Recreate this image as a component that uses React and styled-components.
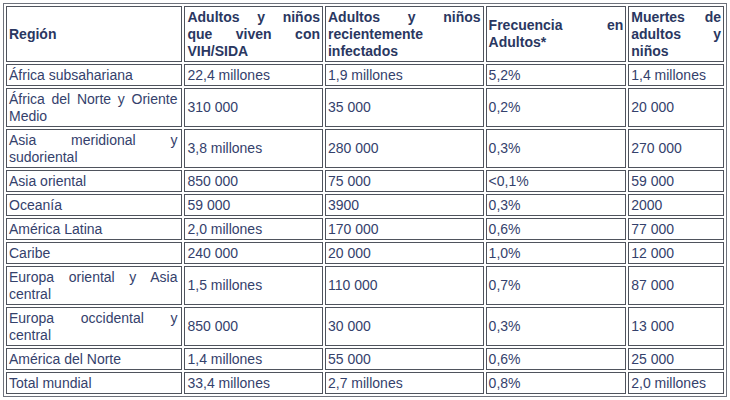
import React from "react";
import styled, { createGlobalStyle } from "styled-components";

const GlobalStyle = createGlobalStyle`
  body {
    margin: 0;
    padding: 3px;
    background: #ffffff;
    font-family: "Liberation Sans", Arial, sans-serif;
  }
`;

const Table = styled.table`
  width: 724px;
  border: 1px solid #6e727c;
  border-collapse: separate;
  border-spacing: 2px;
  color: #34416c;
  font-size: 14px;
  line-height: 17px;
`;

const Col = styled.col`
  width: ${(props) => props.$w}px;
`;

const HeadCell = styled.th`
  border: 1px solid #4f535d;
  padding: 1.5px 2px;
  height: 51px;
  font-weight: bold;
  text-align: ${(props) => (props.$justify ? "justify" : "left")};
  vertical-align: middle;
  color: #2a3761;
`;

const Cell = styled.td`
  border: 1px solid #4f535d;
  padding: 1.5px ${(props) => (props.$justify ? 4 : 2)}px 1.5px 2px;
  height: ${(props) => (props.$tall ? 34 : 17)}px;
  text-align: ${(props) => (props.$justify ? "justify" : "left")};
  vertical-align: middle;
`;

const rows = [
  ["África subsahariana", "22,4 millones", "1,9 millones", "5,2%", "1,4 millones"],
  ["África del Norte y Oriente Medio", "310 000", "35 000", "0,2%", "20 000", true],
  ["Asia meridional y sudoriental", "3,8 millones", "280 000", "0,3%", "270 000", true],
  ["Asia oriental", "850 000", "75 000", "<0,1%", "59 000"],
  ["Oceanía", "59 000", "3900", "0,3%", "2000"],
  ["América Latina", "2,0 millones", "170 000", "0,6%", "77 000"],
  ["Caribe", "240 000", "20 000", "1,0%", "12 000"],
  ["Europa oriental y Asia central", "1,5 millones", "110 000", "0,7%", "87 000", true],
  ["Europa occidental y central", "850 000", "30 000", "0,3%", "13 000", true],
  ["América del Norte", "1,4 millones", "55 000", "0,6%", "25 000"],
  ["Total mundial", "33,4 millones", "2,7 millones", "0,8%", "2,0 millones"],
];

export default function App() {
  return (
    <>
      <GlobalStyle />
      <Table>
        <colgroup>
          <Col $w={177} />
          <Col $w={139} />
          <Col $w={159} />
          <Col $w={141} />
          <Col $w={96} />
        </colgroup>
        <thead>
          <tr>
            <HeadCell>Región</HeadCell>
            <HeadCell $justify>Adultos y niños que viven con VIH/SIDA</HeadCell>
            <HeadCell $justify>Adultos y niños recientemente infectados</HeadCell>
            <HeadCell $justify>Frecuencia en Adultos*</HeadCell>
            <HeadCell $justify>Muertes de adultos y niños</HeadCell>
          </tr>
        </thead>
        <tbody>
          {rows.map(([region, living, infected, freq, deaths, tall]) => (
            <tr key={region}>
              <Cell $justify $tall={tall}>{region}</Cell>
              <Cell>{living}</Cell>
              <Cell>{infected}</Cell>
              <Cell>{freq}</Cell>
              <Cell>{deaths}</Cell>
            </tr>
          ))}
        </tbody>
      </Table>
    </>
  );
}
